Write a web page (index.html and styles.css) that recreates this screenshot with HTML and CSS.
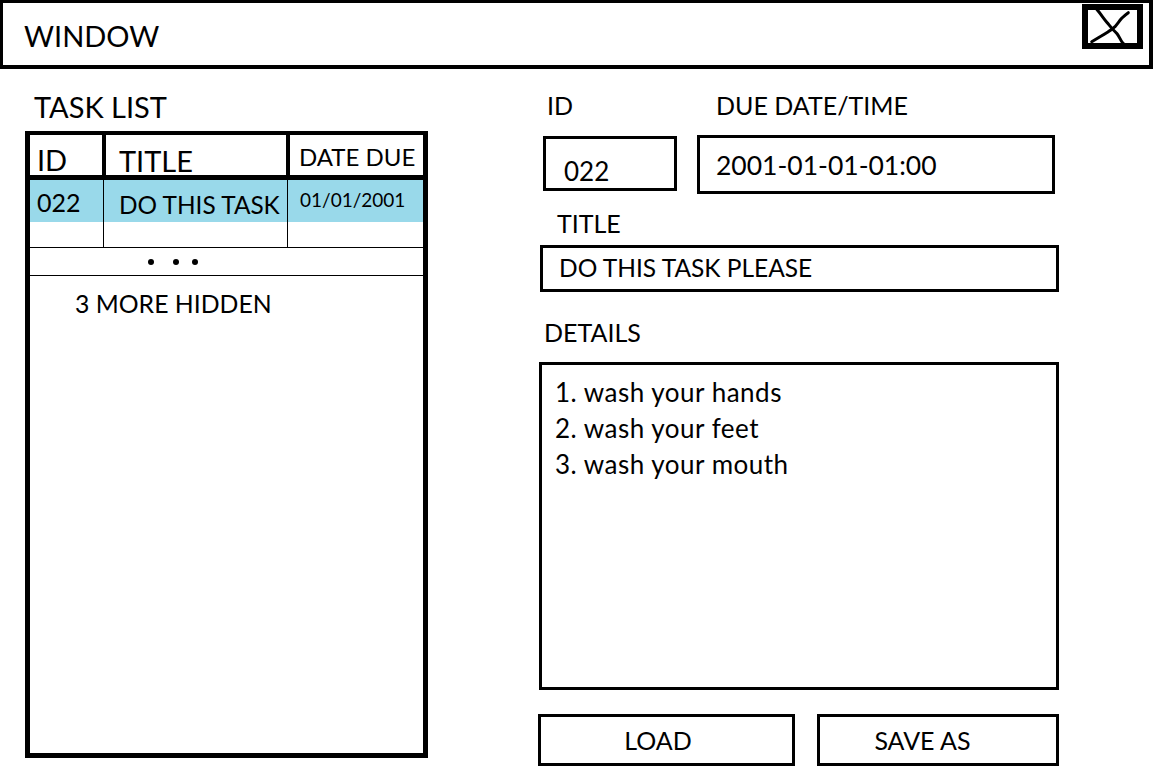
FILE: index.html
```html
<!DOCTYPE html>
<html lang="en">
<head>
<meta charset="utf-8">
<title>Task window</title>
<link rel="stylesheet" href="styles.css">
</head>
<body>
<div class="window">
  <header class="titlebar">
    <span class="title">WINDOW</span>
    <span class="close" aria-label="Close">
      <svg width="61" height="45" viewBox="0 0 61 45">
        <rect x="3" y="3" width="55" height="39" fill="none" stroke="#000" stroke-width="6"/>
        <path d="M14.7 5.3 C18 9, 22 15, 25 18.5 S31 26, 34.7 29.3 C37 32, 38 35, 40 38 S44 41.5, 45.3 41.7" fill="none" stroke="#000" stroke-width="3" stroke-linecap="round" stroke-linejoin="round"/>
        <path d="M46.3 8.7 C43 11, 41 13, 39.7 14.3 C37 17.5, 35 20.5, 33 22.7 C30 25.5, 28 26.8, 26.3 27.7 C23 29.8, 20.5 31.3, 18 32.7 C15 34.5, 12 36.3, 9.7 37.7" fill="none" stroke="#000" stroke-width="3" stroke-linecap="round" stroke-linejoin="round"/>
      </svg>
    </span>
  </header>

  <main class="content">
    <section class="tasks">
      <h2 class="tasks-label">TASK LIST</h2>
      <div class="table">
        <div class="row head">
          <div class="cell h-id">ID</div>
          <div class="cell h-title">TITLE</div>
          <div class="cell h-date">DATE DUE</div>
        </div>
        <div class="row sel">
          <div class="cell d-id">022</div>
          <div class="cell d-title">DO THIS TASK</div>
          <div class="cell d-date">01/01/2001</div>
        </div>
        <div class="row empty">
          <div class="cell d-id"></div>
          <div class="cell d-title"></div>
          <div class="cell d-date"></div>
        </div>
        <div class="row dots">
          <span class="dot"></span><span class="dot"></span><span class="dot"></span>
        </div>
        <div class="more">3 MORE HIDDEN</div>
      </div>
    </section>

    <section class="editor">
      <div class="top-fields">
        <div class="field f-id">
          <div class="label l-id">ID</div>
          <div class="box b-id">022</div>
        </div>
        <div class="field f-due">
          <div class="label l-due">DUE DATE/TIME</div>
          <div class="box b-due">2001-01-01-01:00</div>
        </div>
      </div>

      <div class="label l-title">TITLE</div>
      <div class="box b-title">DO THIS TASK PLEASE</div>

      <div class="label l-details">DETAILS</div>
      <div class="box b-details">
        <div class="line">1. wash your hands</div>
        <div class="line">2. wash your feet</div>
        <div class="line">3. wash your mouth</div>
      </div>

      <div class="actions">
        <button class="btn b-load">LOAD</button>
        <button class="btn b-save">SAVE AS</button>
      </div>
    </section>
  </main>
</div>
</body>
</html>
```

FILE: styles.css
```css
* { box-sizing: border-box; }

body {
  margin: 0;
  background: #fff;
  color: #000;
  font-family: Lato, "Open Sans", "DejaVu Sans", sans-serif;
}

/* ---------- title bar ---------- */
.titlebar {
  height: 69px;
  border-style: solid;
  border-color: #000;
  border-width: 3px 4px 4px 3px;
  display: flex;
  justify-content: space-between;
  align-items: flex-start;
  padding: 0 6px 0 21px;
}
.title {
  font-size: 29px;
  line-height: 29px;
  margin-top: 18px;
}
.close {
  display: block;
  width: 61px;
  height: 45px;
  margin-top: 1px;
}
.close svg { display: block; }

/* ---------- layout ---------- */
.content {
  display: flex;
  padding-left: 25px;
}

/* ---------- task list ---------- */
.tasks { width: 403px; }
.tasks-label {
  margin: 23px 0 10px 9px;
  font-size: 29px;
  line-height: 29px;
  font-weight: 400;
}
.table {
  height: 627px;
  border: 5px solid #000;
  border-top-width: 4px;
  display: flex;
  flex-direction: column;
}
.row { display: flex; }
.cell { display: flex; white-space: nowrap; }

.head {
  height: 45px;
  border-bottom: 5px solid #000;
}
.head .cell { align-items: flex-end; }
.h-id {
  width: 76px;
  border-right: 4px solid #000;
  padding: 0 0 1px 7px;
  font-size: 29px;
  line-height: 29px;
}
.h-title {
  width: 184px;
  border-right: 4px solid #000;
  padding: 0 0 0 13px;
  font-size: 29px;
  line-height: 29px;
}
.h-date {
  flex: 1;
  padding: 0 0 6px 9px;
  font-size: 24px;
  line-height: 24px;
}

.sel {
  height: 42px;
  background: #99d9ea;
}
.d-id { width: 74px; border-right: 1px solid #000; }
.d-title { width: 184px; border-right: 1px solid #000; }
.d-date { flex: 1; }
.sel .cell { align-items: flex-start; }
.sel .d-id { padding: 10px 0 0 7px; font-size: 25px; line-height: 25px; }
.sel .d-title { padding: 12px 0 0 15px; font-size: 24.4px; line-height: 25px; }
.sel .d-date { padding: 10px 0 0 12px; font-size: 19px; line-height: 19px; }

.empty {
  height: 26px;
  border-bottom: 1px solid #000;
}
.dots {
  height: 28px;
  border-bottom: 1px solid #000;
  align-items: center;
  padding: 0 0 0 118px;
}
.dot {
  width: 6px;
  height: 6px;
  border-radius: 50%;
  background: #000;
}
.dot:nth-child(2) { margin-left: 19px; }
.dot:nth-child(3) { margin-left: 13px; }

.more {
  padding: 16px 0 0 45px;
  font-size: 24.8px;
  line-height: 24px;
}

/* ---------- editor ---------- */
.editor {
  margin-left: 110px;
  width: 521px;
}
.label {
  font-size: 25px;
  line-height: 24px;
}
.box {
  border: 3px solid #000;
  font-size: 24.5px;
  line-height: 24px;
  white-space: nowrap;
}

.top-fields { display: flex; }
.f-id { margin-left: 5px; width: 134px; }
.f-due { margin-left: 20px; width: 358px; }
.l-id { margin-top: 24px; padding-left: 4px; }
.l-due { margin-top: 24px; padding-left: 19px; }
.b-id {
  margin-top: 19px;
  height: 55px;
  padding: 20px 0 0 18px;
  font-size: 26px;
}
.b-due {
  margin-top: 18px;
  height: 59px;
  padding: 15px 0 0 16px;
  font-size: 26.5px;
}

.l-title { margin: 17px 0 0 19px; }
.b-title {
  margin: 10px 0 0 2px;
  width: 519px;
  height: 47px;
  padding: 8px 0 0 16px;
}

.l-details { margin: 28px 0 0 6px; }
.b-details {
  margin: 18px 0 0 1px;
  width: 520px;
  height: 328px;
  padding: 9px 0 0 13px;
  font-size: 26px;
  letter-spacing: 0.5px;
}
.line { line-height: 36px; }

.actions {
  display: flex;
  margin-top: 24px;
}
.btn {
  appearance: none;
  background: #fff;
  color: #000;
  border: 3px solid #000;
  border-radius: 0;
  margin: 0;
  font-family: inherit;
  font-size: 25px;
  line-height: 26px;
  display: flex;
  justify-content: center;
  align-items: flex-start;
  padding-top: 10px;
}
.b-load { width: 257px; height: 52px; padding-right: 23px; }
.b-save { width: 242px; height: 52px; margin-left: 22px; padding-right: 37px; }
```
